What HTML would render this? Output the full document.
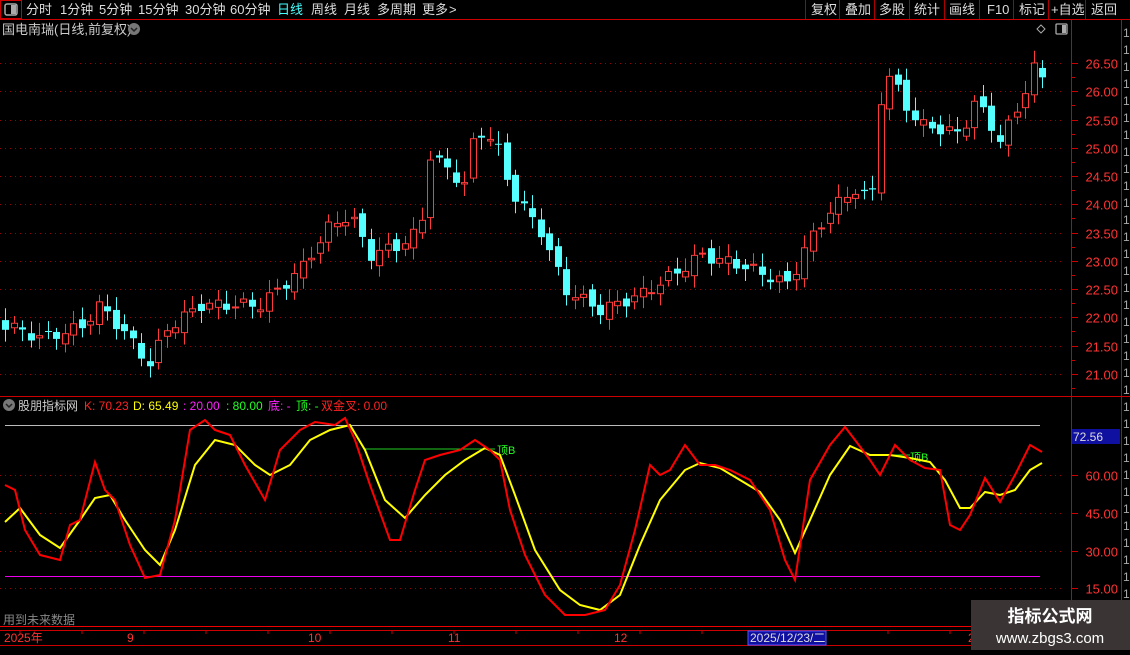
<!DOCTYPE html><html><head><meta charset="utf-8"><style>
body{margin:0;background:#000;width:1130px;height:650px;overflow:hidden;font-family:"Liberation Sans","Noto Sans CJK SC",sans-serif;}
svg text{font-family:"Liberation Sans","Noto Sans CJK SC",sans-serif;}
</style></head><body>
<svg id="s" width="1130" height="650" xmlns="http://www.w3.org/2000/svg">
<rect width="1130" height="650" fill="#000"/>
<rect x="0.5" y="0.5" width="21" height="18" fill="none" stroke="#c00"/>
<rect x="5" y="4" width="12" height="11" rx="2" fill="none" stroke="#aaa" stroke-width="1.5"/><rect x="11" y="5" width="5" height="9" fill="#aaa"/>
<g font-size="13" fill="#ddd">
<text x="26" y="14">分时</text><text x="60" y="14">1分钟</text><text x="99" y="14">5分钟</text><text x="138" y="14">15分钟</text><text x="185" y="14">30分钟</text><text x="230" y="14">60分钟</text>
<text x="277" y="14" fill="#4ff">日线</text><text x="311" y="14">周线</text><text x="344" y="14">月线</text><text x="377" y="14">多周期</text><text x="422" y="14">更多</text><text x="449" y="14">&gt;</text>
<text x="811" y="14">复权</text><text x="845" y="14">叠加</text><text x="879" y="14">多股</text><text x="914" y="14">统计</text><text x="949" y="14">画线</text><text x="987" y="14">F10</text><text x="1019" y="14">标记</text><text x="1051" y="14">+自选</text><text x="1091" y="14">返回</text>
</g>
<g stroke="#a00"><line x1="805.5" y1="0" x2="805.5" y2="19"/><line x1="839.5" y1="0" x2="839.5" y2="19"/><line x1="874.5" y1="0" x2="874.5" y2="19"/><line x1="909.5" y1="0" x2="909.5" y2="19"/><line x1="944.5" y1="0" x2="944.5" y2="19"/><line x1="979.5" y1="0" x2="979.5" y2="19"/><line x1="1013.5" y1="0" x2="1013.5" y2="19"/><line x1="1048.5" y1="0" x2="1048.5" y2="19"/><line x1="1085.5" y1="0" x2="1085.5" y2="19"/></g>
<line x1="0" y1="19.5" x2="1130" y2="19.5" stroke="#c00"/>
<text x="2" y="34" font-size="13" fill="#ccc">国电南瑞(日线,前复权)</text>
<circle cx="134" cy="29" r="6" fill="#777"/><path d="M131 28l3 3 3-3" stroke="#222" stroke-width="1.5" fill="none"/>
<path d="M1041 25l4 4-4 4-4-4z" fill="none" stroke="#aaa"/>
<rect x="1056" y="24" width="11" height="10" rx="1" fill="none" stroke="#aaa" stroke-width="1.3"/><rect x="1062" y="25" width="4" height="8" fill="#aaa"/>
<line x1="1071.5" y1="19" x2="1071.5" y2="650" stroke="#c00"/>
<line x1="1121.5" y1="19" x2="1121.5" y2="650" stroke="#c00"/>
<line x1="0" y1="396.5" x2="1130" y2="396.5" stroke="#c00"/>
<line x1="0" y1="626.5" x2="1071" y2="626.5" stroke="#e00"/>
<line x1="0" y1="630.5" x2="1071" y2="630.5" stroke="#c00"/>
<line x1="0" y1="645.5" x2="1071" y2="645.5" stroke="#c00"/>
<g id="g"></g>
<text x="3" y="624" font-size="12" fill="#888">用到未来数据</text>
<g font-size="12" fill="#f33"><text x="4" y="642">2025年</text><text x="127" y="642">9</text><text x="308" y="642">10</text><text x="448" y="642">11</text><text x="614" y="642">12</text><text x="968" y="642">2</text></g>
<rect x="748" y="631" width="78" height="14" fill="#1010a0" stroke="#55f"/>
<text x="750" y="642" font-size="12" fill="#ddd">2025/12/23/二</text>
<circle cx="9" cy="405" r="6" fill="#777"/><path d="M6 404l3 3 3-3" stroke="#222" stroke-width="1.5" fill="none"/>
<g font-size="12"><text x="18" y="410" fill="#ccc">股朋指标网</text><text x="84" y="410" fill="#f22">K: 70.23</text><text x="133" y="410" fill="#ff0">D: 65.49</text><text x="183" y="410" fill="#f2f">: 20.00</text><text x="226" y="410" fill="#2f2">: 80.00</text><text x="268" y="410" fill="#f2f">底: -</text><text x="296" y="410" fill="#2f2">顶: -</text><text x="321" y="410" fill="#f22">双金叉: 0.00</text></g>
<rect x="1072" y="429" width="48" height="15" fill="#1010a0"/><text x="1073" y="441" font-size="12" fill="#ddd">72.56</text>
<rect x="971" y="600" width="159" height="50" fill="#3a3434"/>
<text x="1050" y="622" font-size="17" font-weight="bold" fill="#fff" text-anchor="middle">指标公式网</text>
<text x="1050" y="643" font-size="15" fill="#fff" text-anchor="middle">www.zbgs3.com</text>
</svg>
<script>
(function(){
var g=document.getElementById('g'),h='';
var P=[26.5,26,25.5,25,24.5,24,23.5,23,22.5,22,21.5,21];
function py(p){return 63+(26.5-p)*56.5;}
P.forEach(function(p){var y=Math.round(py(p))+.5;h+='<line x1="0" y1="'+y+'" x2="1065" y2="'+y+'" stroke="#900" stroke-dasharray="1,4"/>';h+='<line x1="1071" y1="'+y+'" x2="1078" y2="'+y+'" stroke="#c00"/>';h+='<text x="1118" y="'+(y+5)+'" font-size="13" fill="#f33" text-anchor="end">'+p.toFixed(2)+'</text>';var y2=y+14;h+='<line x1="1071" y1="'+y2+'" x2="1075" y2="'+y2+'" stroke="#c00"/>';});
[[60,475],[45,513],[30,551],[15,588]].forEach(function(a){var y=a[1]+.5;h+='<line x1="0" y1="'+y+'" x2="1065" y2="'+y+'" stroke="#900" stroke-dasharray="1,4"/><line x1="1071" y1="'+y+'" x2="1078" y2="'+y+'" stroke="#c00"/><text x="1118" y="'+(y+5)+'" font-size="13" fill="#f33" text-anchor="end">'+a[0].toFixed(2)+'</text>';});
for(var x=20;x<1071;x+=62){h+='<line x1="'+x+'" y1="631" x2="'+x+'" y2="634" stroke="#c00"/>';}
for(var y=25;y<600;y+=17){h+='<text x="1123" y="'+(y+12)+'" font-size="12" fill="#aaa">1</text>';}
var K=[[5,325],[40,338],[80,328],[100,305],[130,340],[150,365],[165,330],[200,305],[260,305],[300,270],[330,225],[350,215],[370,255],[400,245],[420,230],[430,155],[465,185],[475,130],[495,140],[510,190],[540,230],[565,290],[600,310],[640,295],[680,270],[700,255],[740,265],[790,285],[800,255],[830,210],[860,185],[870,215],[880,100],[890,75],[905,105],[920,125],[945,130],[960,135],[975,100],[990,125],[1000,140],[1020,105],[1032,65],[1042,80]];
function interp(A,x){for(var i=0;i<A.length-1;i++){if(x<=A[i+1][0]){var t=(x-A[i][0])/(A[i+1][0]-A[i][0]);return A[i][1]+t*(A[i+1][1]-A[i][1]);}}return A[A.length-1][1];}
var prev=325;
for(var x=5;x<=1043;x+=8.5){var c=interp(K,x)+Math.sin(x*1.7)*6;var o=prev+Math.sin(x*0.9)*5;var hi=Math.min(o,c)-4-Math.abs(Math.sin(x*2.3))*9;var lo=Math.max(o,c)+4+Math.abs(Math.cos(x*1.3))*8;var up=c<o;var col=up?'#ff3a3a':'#55ffff';var xx=Math.round(x);var bt=Math.min(o,c),ht=Math.max(1,Math.abs(o-c));
h+='<line x1="'+(xx+.5)+'" y1="'+hi+'" x2="'+(xx+.5)+'" y2="'+lo+'" stroke="'+col+'"/>';
if(up)h+='<rect x="'+(xx-2.5)+'" y="'+bt+'" width="6" height="'+ht+'" fill="#000" stroke="'+col+'"/>';else h+='<rect x="'+(xx-3)+'" y="'+bt+'" width="7" height="'+ht+'" fill="'+col+'"/>';prev=c;}
h+='<line x1="5" y1="425.5" x2="1040" y2="425.5" stroke="#bbb"/>';
h+='<line x1="5" y1="576.5" x2="1040" y2="576.5" stroke="#e0e"/>';
h+='<line x1="365" y1="449" x2="495" y2="449" stroke="#2c2"/><text x="497" y="454" font-size="11" fill="#2f2">顶B</text>';
h+='<line x1="870" y1="455" x2="910" y2="455" stroke="#2c2"/><text x="910" y="461" font-size="11" fill="#2f2">顶B</text>';
var KK="5,485 15,490 25,530 40,555 60,560 70,525 80,520 95,462 105,490 115,500 130,545 145,578 160,575 175,520 190,430 205,420 215,430 230,435 245,465 265,500 280,450 300,430 315,422 335,425 345,418 355,440 370,485 390,540 400,540 415,490 425,460 440,455 460,450 475,440 490,450 500,460 510,510 525,555 545,595 565,615 585,615 605,610 620,585 635,530 650,465 660,475 670,470 685,445 700,465 715,465 730,470 750,480 770,510 785,560 795,580 810,480 830,445 845,427 855,440 870,460 880,475 895,445 910,460 925,468 940,470 950,525 960,530 970,515 985,478 1000,502 1015,475 1030,445 1042,452";
var DD="5,522 20,508 40,535 60,548 80,520 95,498 110,495 125,520 145,550 160,565 175,530 195,465 215,440 235,445 255,465 270,475 290,465 310,440 330,430 350,425 365,450 385,500 405,518 425,495 445,475 465,460 485,448 500,455 515,495 535,550 560,590 580,605 600,610 620,595 640,545 660,500 685,470 700,463 720,468 740,480 760,492 780,520 795,553 810,520 830,475 850,446 870,455 890,455 910,458 930,462 945,480 960,508 970,508 985,492 1000,495 1015,490 1030,470 1042,463";
h+='<polyline points="'+DD+'" fill="none" stroke="#ff0" stroke-width="2"/>';
h+='<polyline points="'+KK+'" fill="none" stroke="#f00" stroke-width="2"/>';
g.innerHTML=h;
})();
</script>
</body></html>
